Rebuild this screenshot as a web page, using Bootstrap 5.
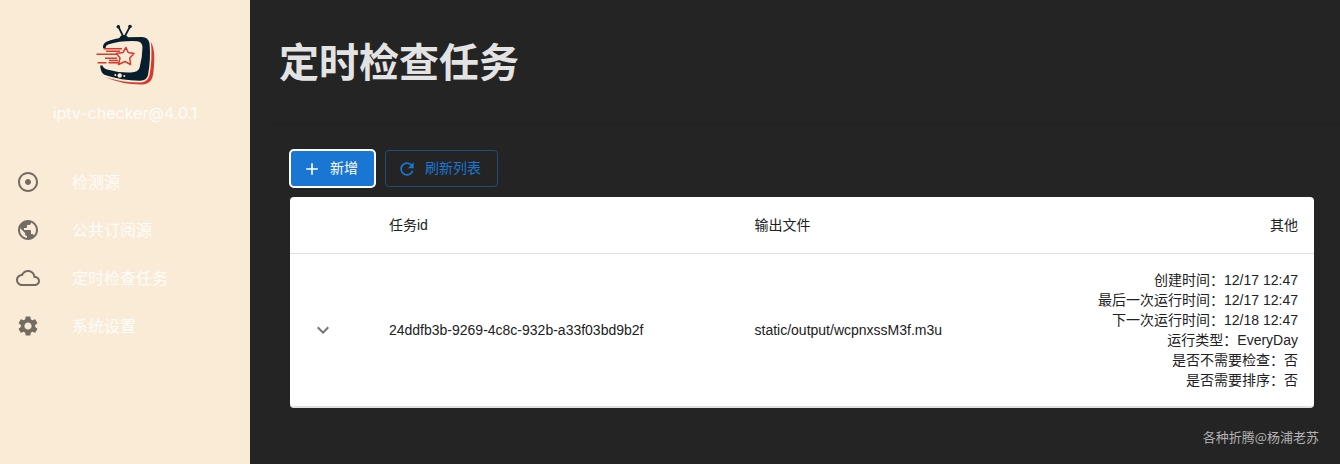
<!DOCTYPE html>
<html lang="zh-CN">
<head>
<meta charset="utf-8">
<meta name="viewport" content="width=device-width, initial-scale=1">
<title>iptv-checker</title>
<link href="https://cdn.jsdelivr.net/npm/bootstrap@5.3.0/dist/css/bootstrap.min.css" rel="stylesheet">
<style>
  body { background: #242424; font-family: "Liberation Sans", "Noto Sans CJK SC", sans-serif; font-size: 14px; line-height: 20px; }
  .sidebar { width: 250px; background: #faebd7; color: #fffdfa; font-family: Inter, "Noto Sans CJK SC", sans-serif; font-size: 16px; line-height: 24px; }
  .brand { padding-top: 15px; gap: 6px; }
  .logo { width: 80px; height: 80px; }
  .icon { width: 24px; height: 24px; fill: currentColor; flex: none; }
  .menu { margin-top: 33px; }
  .menu .nav-link { color: inherit; padding: 12px 16px; gap: 32px; }
  .menu .icon { color: #736c63; }
  .page-title { color: #e3e3e3; font-size: 40px; line-height: 48px; font-weight: 700; padding: 39px 29px 37px; }
  .rule { height: 1px; background: #202020; margin-left: 20px; }
  .content { padding: 25px 26px 0 40px; }
  .toolbar { gap: 10px; }
  .tool { --bs-btn-font-size: 14px; --bs-btn-line-height: 23px; --bs-btn-border-radius: 4px; --bs-btn-padding-y: 6px; padding-left: 11px; padding-right: 16px; gap: 8px; height: 37px; }
  .tool .icon { width: 20px; height: 20px; }
  .tool-add { --bs-btn-color: #fff; --bs-btn-bg: #1976d2; --bs-btn-border-color: #1976d2; --bs-btn-hover-color: #fff; --bs-btn-hover-bg: #1565c0; outline: 2px solid #fff; outline-offset: -1px; }
  .tool-refresh { --bs-btn-color: #1976d2; --bs-btn-border-color: #204c7a; --bs-btn-hover-color: #1976d2; --bs-btn-hover-border-color: #1976d2; }
  .panel { background: #fff; border-radius: 4px; margin-top: 10px; overflow: hidden; border-bottom: 1px solid #e0e0e0; }
  .tasks { table-layout: fixed; color: #212121; --bs-table-color: #212121; }
  .tasks > :not(caption) > * > * { padding: 18px 16px; border-bottom: 1px solid #e0e0e0; font-weight: 400; }
  .tasks > tbody > tr > td { padding: 16px; }
  .col-toggle { width: 8.1%; }
  .col-name { width: 35.7%; }
  .toggle { color: #757575; margin-left: 5px; }
  .credit { color: #b4b4b4; padding: 19px 21px 0 0; font-family: "Noto Sans CJK SC", sans-serif; font-size: 13px; }
</style>
</head>
<body>
<div class="d-flex min-vh-100">
  <aside class="sidebar flex-shrink-0">
    <div class="brand d-flex flex-column align-items-center">
      <svg class="logo" viewBox="0 0 80 80" aria-hidden="true">
        <path d="M66 27Q69.500 33 69.300 44Q69 57 67.500 62Q65.500 69 58 69.500Q38 70 20 62Q36 67.500 56 67.500Q63 67 64.500 60Q67.500 44 66 27Z" fill="#d43a2d"/>
        <path fill-rule="evenodd" d="M18 32Q18 28 22 26.500Q30 23 42 22.300L57 22Q63 22 64.500 28Q66 44 63 60Q62 65.500 55 65.700Q36 65.500 20 60Q15.500 58 15.200 50.500H17.500Q18 53 22 54.500Q34 58 46 57.500Q53 57 54.500 53Q57.500 42 57.500 32Q57 26.500 52 26.200Q36 25.500 23 29.500Q20.500 30.500 20.500 33H18Z" fill="#071f2d"/>
        <path d="M38 21L33.300 11.500M40 21L45 11.500" fill="none" stroke="#071f2d" stroke-width="1.700"/>
        <path d="M34 25Q34.500 20 39 20Q43 20 44 25Z" fill="#071f2d"/>
        <circle cx="33.300" cy="11.800" r="1.800" fill="#071f2d"/><circle cx="45" cy="11.500" r="1.800" fill="#071f2d"/>
        <path d="M18.500 33.700H37M11.500 39.200H34M20 43.300H32M12.500 47.700H21.500M23.500 47.700H34M21 36.300H35M24 45.500H33" fill="none" stroke="#d43a2d" stroke-width="1.500"/>
        <path d="M41 32.500L43.200 37.500L49 38.500L44.800 43L45.500 49.500L40 46.500L33.500 49.500L35 43L31.500 38.500L38 37.500Z" fill="#faebd7" stroke="#d43a2d" stroke-width="1.500" stroke-linejoin="round"/>
        <circle cx="34.700" cy="60.500" r="2.200" fill="#faebd7"/><circle cx="30.300" cy="60" r="1" fill="#faebd7"/><circle cx="39.300" cy="61" r="1" fill="#faebd7"/>
      </svg>
      <div>iptv-checker@4.0.1</div>
    </div>
    <nav class="menu nav flex-column">
      <a class="nav-link d-flex align-items-center" href="#source">
        <svg class="icon" viewBox="0 0 24 24" aria-hidden="true"><path d="M12 2C6.49 2 2 6.49 2 12s4.49 10 10 10 10-4.49 10-10S17.51 2 12 2zm0 18c-4.41 0-8-3.59-8-8s3.59-8 8-8 8 3.59 8 8-3.59 8-8 8zm3-8c0 1.66-1.34 3-3 3s-3-1.34-3-3 1.34-3 3-3 3 1.34 3 3z"/></svg>
        <span>检测源</span>
      </a>
      <a class="nav-link d-flex align-items-center" href="#public">
        <svg class="icon" viewBox="0 0 24 24" aria-hidden="true"><path d="M12 2C6.48 2 2 6.48 2 12s4.48 10 10 10 10-4.48 10-10S17.52 2 12 2zm-1 17.93c-3.95-.49-7-3.85-7-7.93 0-.62.08-1.21.21-1.79L9 15v1c0 1.1.9 2 2 2v1.93zm6.9-2.54c-.26-.81-1-1.39-1.9-1.39h-1v-3c0-.55-.45-1-1-1H8v-2h2c.55 0 1-.45 1-1V7h2c1.100 0 2-.9 2-2v-.41c2.930 1.190 5 4.060 5 7.410 0 2.080-.8 3.970-2.100 5.390z"/></svg>
        <span>公共订阅源</span>
      </a>
      <a class="nav-link d-flex align-items-center" href="#tasks">
        <svg class="icon" viewBox="0 0 24 24" aria-hidden="true"><path d="M19.350 10.040C18.670 6.590 15.640 4 12 4 9.110 4 6.600 5.640 5.350 8.040 2.340 8.360 0 10.910 0 14c0 3.310 2.690 6 6 6h13c2.760 0 5-2.240 5-5 0-2.640-2.050-4.780-4.650-4.960zM19 18H6c-2.210 0-4-1.790-4-4s1.790-4 4-4h.71C7.370 7.690 9.480 6 12 6c3.040 0 5.500 2.460 5.500 5.500v.5H19c1.660 0 3 1.340 3 3s-1.340 3-3 3z"/></svg>
        <span>定时检查任务</span>
      </a>
      <a class="nav-link d-flex align-items-center" href="#settings">
        <svg class="icon" viewBox="0 0 24 24" aria-hidden="true"><path d="M19.140 12.940c.04-.3.06-.61.06-.94 0-.32-.02-.64-.07-.94l2.030-1.580c.18-.14.23-.41.12-.61l-1.920-3.320c-.12-.22-.37-.29-.59-.22l-2.390.96c-.5-.38-1.030-.7-1.620-.94l-.36-2.540c-.04-.24-.24-.41-.48-.41h-3.840c-.24 0-.43.17-.47.41l-.36 2.540c-.59.24-1.130.57-1.620.94l-2.390-.96c-.22-.08-.47 0-.59.22L2.740 8.870c-.12.21-.08.47.12.61l2.030 1.580c-.05.3-.09.63-.09.94s.02.64.07.94l-2.030 1.580c-.18.14-.23.41-.12.61l1.920 3.320c.12.22.37.29.59.22l2.390-.96c.5.38 1.030.7 1.620.94l.36 2.540c.05.24.24.41.48.41h3.840c.24 0 .44-.17.47-.41l.36-2.540c.59-.24 1.130-.56 1.620-.94l2.390.96c.22.08.47 0 .59-.22l1.920-3.320c.12-.22.07-.47-.12-.61l-2.010-1.580zM12 15.600c-1.980 0-3.600-1.620-3.600-3.600s1.620-3.600 3.600-3.600 3.600 1.620 3.600 3.600-1.620 3.600-3.600 3.600z"/></svg>
        <span>系统设置</span>
      </a>
    </nav>
  </aside>

  <main class="flex-grow-1">
    <h1 class="page-title m-0">定时检查任务</h1>
    <div class="rule"></div>
    <div class="content">
      <div class="toolbar d-flex">
        <button type="button" class="btn tool tool-add d-flex align-items-center">
          <svg class="icon" viewBox="0 0 24 24" aria-hidden="true"><path d="M19 13h-6v6h-2v-6H5v-2h6V5h2v6h6v2z"/></svg>新增
        </button>
        <button type="button" class="btn tool tool-refresh d-flex align-items-center">
          <svg class="icon" viewBox="0 0 24 24" aria-hidden="true"><path d="M17.650 6.350C16.200 4.900 14.210 4 12 4c-4.420 0-7.990 3.580-7.990 8s3.570 8 7.990 8c3.730 0 6.840-2.550 7.730-6h-2.080c-.82 2.330-3.040 4-5.650 4-3.310 0-6-2.690-6-6s2.690-6 6-6c1.660 0 3.140.69 4.220 1.780L13 11h7V4l-2.350 2.350z"/></svg>刷新列表
        </button>
      </div>
      <div class="panel">
        <table class="table tasks m-0 align-middle">
          <colgroup><col class="col-toggle"><col class="col-name"><col><col></colgroup>
          <thead>
            <tr><th></th><th scope="col">任务id</th><th scope="col">输出文件</th><th scope="col" class="text-end">其他</th></tr>
          </thead>
          <tbody>
            <tr>
              <td><button type="button" class="toggle btn p-0 border-0 d-flex" aria-label="展开"><svg class="icon" viewBox="0 0 24 24" aria-hidden="true"><path d="M7.410 8.590 12 13.170l4.590-4.580L18 10l-6 6-6-6 1.410-1.410z"/></svg></button></td>
              <td>24ddfb3b-9269-4c8c-932b-a33f03bd9b2f</td>
              <td>static/output/wcpnxssM3f.m3u</td>
              <td class="text-end">
                <div>创建时间：12/17 12:47</div>
                <div>最后一次运行时间：12/17 12:47</div>
                <div>下一次运行时间：12/18 12:47</div>
                <div>运行类型：EveryDay</div>
                <div>是否不需要检查：否</div>
                <div>是否需要排序：否</div>
              </td>
            </tr>
          </tbody>
        </table>
      </div>
    </div>
    <div class="credit text-end">各种折腾@杨浦老苏</div>
  </main>
</div>
<script src="https://cdn.jsdelivr.net/npm/bootstrap@5.3.0/dist/js/bootstrap.bundle.min.js"></script>
</body>
</html>
